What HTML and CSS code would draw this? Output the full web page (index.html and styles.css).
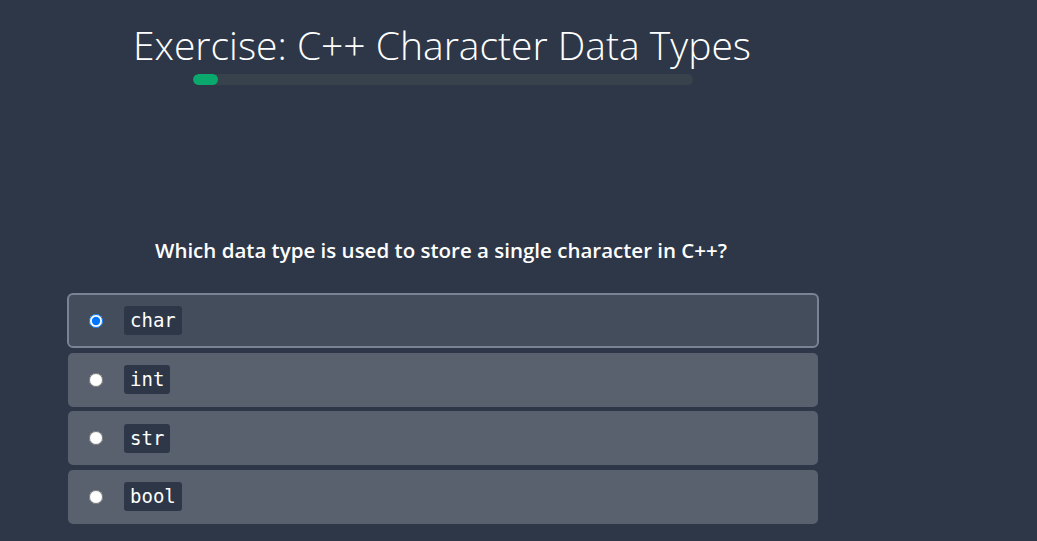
FILE: index.html
```html
<!DOCTYPE html>
<html>
<head>
<meta charset="utf-8">
<link rel="stylesheet" href="styles.css">
</head>
<body>
<div class="page">
  <header class="head">
    <h1 class="title">Exercise: C++ Character Data Types</h1>
    <div class="progress"><div class="progress-fill" style="width:5%"></div></div>
  </header>
  <section class="quiz">
    <p class="question">Which data type is used to store a single character in C++?</p>
    <div class="options">
      <label class="option selected"><input type="radio" name="q" checked><code class="chip">char</code></label>
      <label class="option"><input type="radio" name="q"><code class="chip">int</code></label>
      <label class="option"><input type="radio" name="q"><code class="chip">str</code></label>
      <label class="option"><input type="radio" name="q"><code class="chip">bool</code></label>
    </div>
  </section>
</div>
</body>
</html>
```

FILE: styles.css
```css
html, body {
  margin: 0;
  padding: 0;
  background: #2d3748;
  height: 100%;
}
body {
  color: #ffffff;
  font-family: "Open Sans", "Noto Sans", sans-serif;
}
.page {
  width: 1037px;
  height: 541px;
  overflow: hidden;
}
.head {
  display: flex;
  flex-direction: column;
  padding-top: 19px;
}
.title {
  margin: 0 0 0 133px;
  font-weight: 300;
  font-size: 39px;
  line-height: 52px;
  letter-spacing: 0;
}
.progress {
  margin: 3px 0 0 193px;
  width: 500px;
  height: 11px;
  border-radius: 6px;
  background: #37424d;
  overflow: hidden;
}
.progress-fill {
  height: 100%;
  background: #0aa86c;
  border-radius: 6px;
}
.quiz {
  padding-top: 151px;
}
.question {
  margin: 0 0 0 155px;
  font-family: "Open Sans", sans-serif;
  font-weight: 600;
  font-size: 20.5px;
  line-height: 28px;
}
.options {
  margin: 29px 0 0 67px;
  width: 752px;
  display: flex;
  flex-direction: column;
  gap: 4.5px;
}
.option {
  display: flex;
  align-items: center;
  height: 54px;
  box-sizing: border-box;
  margin: 0 1px;
  padding-left: 21px;
  border-radius: 5px;
  background: #59616f;
  border: 0;
}
.option.selected {
  margin: 0;
  height: 55px;
  padding-left: 20px;
  background: #444d5c;
  border: 2px solid #7a8393;
  border-radius: 6px;
}
.option input {
  margin: 0;
  width: 14px;
  height: 14px;
}
.chip {
  margin-left: 21px;
  background: #2d3748;
  border-radius: 3px;
  padding: 0 6px;
  height: 29px;
  line-height: 29px;
  font-family: "DejaVu Sans Mono", monospace;
  font-size: 19px;
  color: #ffffff;
}
```
